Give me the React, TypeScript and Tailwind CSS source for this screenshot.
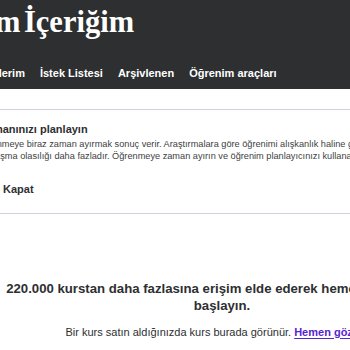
import React from 'react';

const tabs = ['Tüm kurslar', 'Listelerim', 'İstek Listesi', 'Arşivlenen', 'Öğrenim araçları'];

export default function App() {
  return (
    <div className="w-[350px] h-[350px] overflow-hidden bg-white font-['Liberation_Sans',Arial,sans-serif] text-[#2d2f31]">
      {/* page is wider than the window; this crop starts mid-title */}
      <div className="w-[660px] -ml-[108px]">
        {/* Header */}
        <div className="bg-[#2d2f31] pt-[7px] pb-[8px]">
          <h1 className="pl-[12px] text-[30.5px] leading-none font-bold text-white [word-spacing:-4px] font-['Liberation_Serif','Times_New_Roman',serif]">
            Öğrenim İçeriğim
          </h1>
          <div className="mt-[27px] pl-[3px] flex gap-[15px] text-[11px] leading-[16px] font-bold text-white">
            {tabs.map((t) => (
              <span key={t}>{t}</span>
            ))}
          </div>
        </div>

        {/* Schedule card */}
        <div className="mt-[20px] ml-[20px] border border-[#d1d2e0] pl-[27px] pt-[11px] pb-[9px]">
          <h2 className="-ml-[7px] text-[11px] leading-[16px] font-bold">Öğrenim zamanınızı planlayın</h2>
          <p className="mt-[1px] indent-[3px] text-[9.2px] leading-[12px] text-[#3e4143] whitespace-nowrap">
            Her gün öğrenmeye biraz zaman ayırmak sonuç verir. Araştırmalara göre öğrenimi alışkanlık haline getiren öğrencilerin
            <br />
            hedeflerine ulaşma olasılığı daha fazladır. Öğrenmeye zaman ayırın ve öğrenim planlayıcınızı kullanarak hatırlatıcılar alın.
          </p>
          <div className="mt-[14px] flex items-center gap-[8px]">
            <button className="h-[28px] w-[55px] overflow-hidden bg-[#2d2f31] text-white text-[11px] font-bold">Başlayın</button>
            <button className="h-[28px] px-0 text-[11px] font-bold">Kapat</button>
          </div>
        </div>

        {/* Empty state */}
        <div className="mt-[66px] text-center">
          <h3 className="mx-auto max-w-[450px] text-[13.2px] leading-[17px] font-bold">
            220.000 kurstan daha fazlasına erişim elde ederek hemen öğrenmeye başlayın.
          </h3>
          <p className="mt-[10px] text-[11px] leading-[16px]">
            Bir kurs satın aldığınızda kurs burada görünür.{' '}
            <a href="#" className="font-bold text-[#5624d0] underline underline-offset-2">
              Hemen göz atın.
            </a>
          </p>
        </div>
      </div>
    </div>
  );
}
